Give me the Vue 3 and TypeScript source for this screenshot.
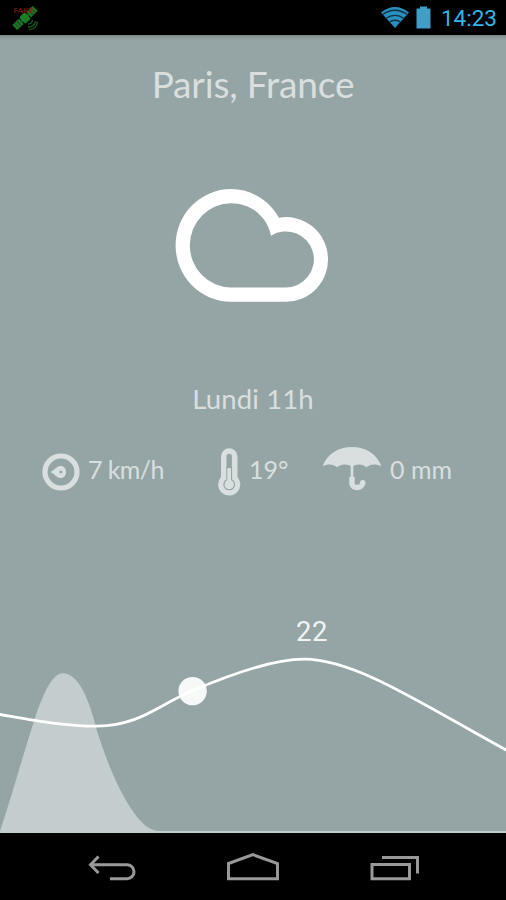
<script setup lang="ts">
import { computed, ref } from 'vue';

interface Forecast {
  label: string;
  wind: number;
  temperature: number;
  rain: number;
}

const city = ref('Paris, France');
const clock = ref('14:23');
const peak = ref(22);
const forecast = ref<Forecast>({ label: 'Lundi 11h', wind: 7, temperature: 19, rain: 0 });

const wind = computed(() => `${forecast.value.wind} km/h`);
const temperature = computed(() => `${forecast.value.temperature}°`);
const rain = computed(() => `${forecast.value.rain} mm`);
</script>

<template>
  <div class="screen">
    <header class="status-bar">
      <svg class="gps" width="30" height="30" viewBox="0 0 30 30" aria-hidden="true">
        <g transform="rotate(-43 14 14)">
          <path d="M0 10.500h9v7H0zM19 10.500h9v7h-9z" fill="#187a22" />
          <path d="M3 10v8M6 10v8M22 10v8M25 10v8" stroke="#29452b" stroke-width="1.200" />
          <path d="M9 14h10" stroke="#3c4a3c" stroke-width="2" />
          <rect x="10" y="9.500" width="8" height="9" rx="2" fill="#188022" />
        </g>
        <path d="M17 20q4 0 4.500-4M17 23q7 0 7.500-6M18 25.500q7.500 0 8.500-8" fill="none" stroke="#145c1c" stroke-width="1.400" />
        <text x="2.500" y="8.800" class="fake">FAKE</text>
      </svg>
      <div class="status-icons">
        <svg width="30" height="24" viewBox="0 0 30 24" aria-hidden="true">
          <path d="M1 6.500Q15-4.500 29 6.500L15 22Z" fill="#2a8fbd" />
          <path d="M2 9Q15-0.500 28 9M5.500 12.700Q15 6 24.500 12.700M9 16.500Q15 12 21 16.500" fill="none" stroke="#0b3143" stroke-width="1.300" />
        </svg>
        <svg class="battery" width="15" height="24" viewBox="0 0 15 24" aria-hidden="true">
          <path d="M4 1.500h7v2h3.500v20H.5v-20H4z" fill="#419dc5" />
        </svg>
        <span class="clock">{{ clock }}</span>
      </div>
    </header>

    <main class="weather">
      <h1 class="city">{{ city }}</h1>

      <svg class="cloud" width="154" height="114" viewBox="175 188 154 114" aria-label="Nuageux">
        <path
          fill="#fff"
          fill-rule="evenodd"
          d="M231 301.700A55.400 56.300 0 0 1 231 189.100C251 189.100 269 200 279 217.700A42 42.300 0 1 1 285.300 301.700ZM231 287.400H285.300A28 28 0 1 0 271 235.700C267 216.500 251 203.300 231 203.300A41.200 42.050 0 0 0 231 287.400Z"
        />
      </svg>

      <p class="moment">{{ forecast.label }}</p>

      <div class="details">
        <div class="detail wind">
          <svg width="38" height="38" viewBox="0 0 38 38" aria-hidden="true">
            <circle cx="19" cy="19" r="16" fill="none" stroke="currentColor" stroke-width="5.200" />
            <path fill="currentColor" fill-rule="evenodd" d="M8.500 19C12 17.500 14.500 13 18.500 13C22 13 24 15.500 24 19S22 25 18.500 25C14.500 25 12 20.500 8.500 19ZM18.900 17.500a1.500 1.500 0 1 0 .01 0Z" />
          </svg>
          <span>{{ wind }}</span>
        </div>
        <div class="detail temperature">
          <svg width="24" height="50" viewBox="0 0 24 50" aria-hidden="true">
            <path fill="currentColor" d="M4 9.500a8 8 0 0 1 16.500 0V30a11.100 11.100 0 1 1-16.500 0Z" />
            <path fill="#95a5a5" d="M9.500 9.500a2.700 2.700 0 0 1 5.400 0V22H9.500Z" />
            <path fill="none" stroke="#95a5a5" stroke-width="1.200" d="M9.900 20V32.700A5.300 5.300 0 1 0 14.500 32.700V20" />
            <path fill="currentColor" d="M10.600 21h3.200v12.500a4.200 4.200 0 1 1-3.200 0Z" />
          </svg>
          <span>{{ temperature }}</span>
        </div>
        <div class="detail rain">
          <svg width="60" height="46" viewBox="0 0 60 46" aria-hidden="true">
            <path fill="currentColor" d="M.7 21.200C5 9 16.500 2 30 2S55 9 59.300 21.200C54 18.500 48 18.800 44.300 22.300C40.500 18.700 34.500 18.700 30.200 21.800C25.500 18.700 19 18.700 15.300 22.300C11.500 18.800 5.500 18.500 .7 21.200Z" />
            <path fill="none" stroke="currentColor" stroke-width="2.600" d="M30 19v15" />
            <path fill="none" stroke="currentColor" stroke-width="5.400" d="M30 32v6.500c0 5.500 10 5.500 10.800 -.5" />
            <circle cx="40.700" cy="37.800" r="2.700" fill="currentColor" />
          </svg>
          <span>{{ rain }}</span>
        </div>
      </div>

      <svg class="chart" width="506" height="233" viewBox="0 600 506 233" aria-hidden="true">
        <path class="rain-area" d="M0 831C12 796 22 758 35 718C44 691 53 673.200 63 673.200C78 673.200 89 698 97 731C108 766 120 792 132 810C141 823 149 831 160 831H506V833H0Z" />
        <text x="312" y="641.300" text-anchor="middle" class="peak">{{ peak }}</text>
        <circle cx="192.600" cy="691.100" r="14.200" class="cursor" />
        <path class="curve" d="M-1 714.300C32 720 64 726.300 97 726.200C140 725.500 157 705.500 193 690.500C221 678.500 270 659.200 304 659.200C356 659.200 425 706 507 750.500" />
      </svg>
    </main>

    <nav class="nav-bar">
      <svg width="50" height="32" viewBox="0 0 50 32">
        <path d="M11.500 6.500L3.500 14.700L11.500 23M4 14.700H40A7 7 0 0 1 40 28.700H23" />
      </svg>
      <svg width="54" height="32" viewBox="0 0 54 32">
        <path d="M2.500 13.500L27 4.700L51.500 13.500V28.800H2.500Z" />
      </svg>
      <svg width="52" height="32" viewBox="0 0 52 32">
        <path d="M3 14.500H40.500V28.800H3ZM13 7.500H48.500V23.500" />
      </svg>
    </nav>
  </div>
</template>

<style>
body {
  background: #000;
  overflow: hidden;
}
</style>

<style scoped>
.screen {
  display: flex;
  flex-direction: column;
  width: 506px;
  height: 900px;
  background: #000;
}

.status-bar {
  display: flex;
  justify-content: space-between;
  height: 35px;
  padding: 0 9px 0 11px;
}

.gps {
  margin-top: 4px;
}

.fake {
  font: 700 8px Roboto, sans-serif;
  letter-spacing: 0.3px;
  fill: #8a1b13;
  fill-opacity: 0.8;
}

.status-icons {
  display: flex;
  align-items: flex-start;
  padding-top: 6px;
}

.battery {
  margin: -1px 10px 0 6px;
}

.clock {
  font: 400 22.500px/24px Roboto, sans-serif;
  color: #33b5e5;
}

/* ---- Forecast ---- */
.weather {
  display: flex;
  flex-direction: column;
  align-items: center;
  height: 798px;
  background: linear-gradient(#788585 0, #8e9d9d 3px, #95a5a5 6px);
  color: #d9dfdf;
  font-family: Lato, sans-serif;
}

.city {
  margin: 25px 0 0;
  font-size: 37px;
  font-weight: 400;
  letter-spacing: -0.15px;
  line-height: 47px;
  white-space: nowrap;
}

.cloud {
  flex-shrink: 0;
  margin: 81px 0 0 -3px;
}

.moment {
  margin: 79px 0 0;
  font-size: 27.500px;
  letter-spacing: 0.15px;
  line-height: 36px;
  white-space: nowrap;
}

.details {
  display: flex;
  align-items: center;
  align-self: stretch;
  height: 50px;
  margin-top: 30px;
  padding-left: 42px;
  font-size: 25px;
}

.detail {
  display: flex;
  align-items: center;
  flex-shrink: 0;
  gap: 8px;
  white-space: nowrap;
}

.detail svg {
  flex-shrink: 0;
}

.detail span {
  padding-bottom: 6px;
}

.wind {
  width: 175px;
  letter-spacing: -0.6px;
}

.temperature {
  width: 105px;
}

.rain svg {
  margin-bottom: 9px;
}

.chart {
  display: block;
  flex-shrink: 0;
  margin-top: auto;
}

.rain-area {
  fill: #c4cdce;
}

.curve {
  fill: none;
  stroke: #fff;
  stroke-width: 2.800;
}

.cursor {
  fill: #f7f9f9;
}

.peak {
  font: 400 27.500px Roboto, sans-serif;
  letter-spacing: 0.5px;
  fill: #f0f3f3;
}

/* ---- System buttons ---- */
.nav-bar {
  display: flex;
  justify-content: space-between;
  height: 67px;
  padding: 17px 85px 0 87px;
  box-sizing: border-box;
}

.nav-bar path {
  fill: none;
  stroke: #999;
  stroke-width: 3;
}
</style>
